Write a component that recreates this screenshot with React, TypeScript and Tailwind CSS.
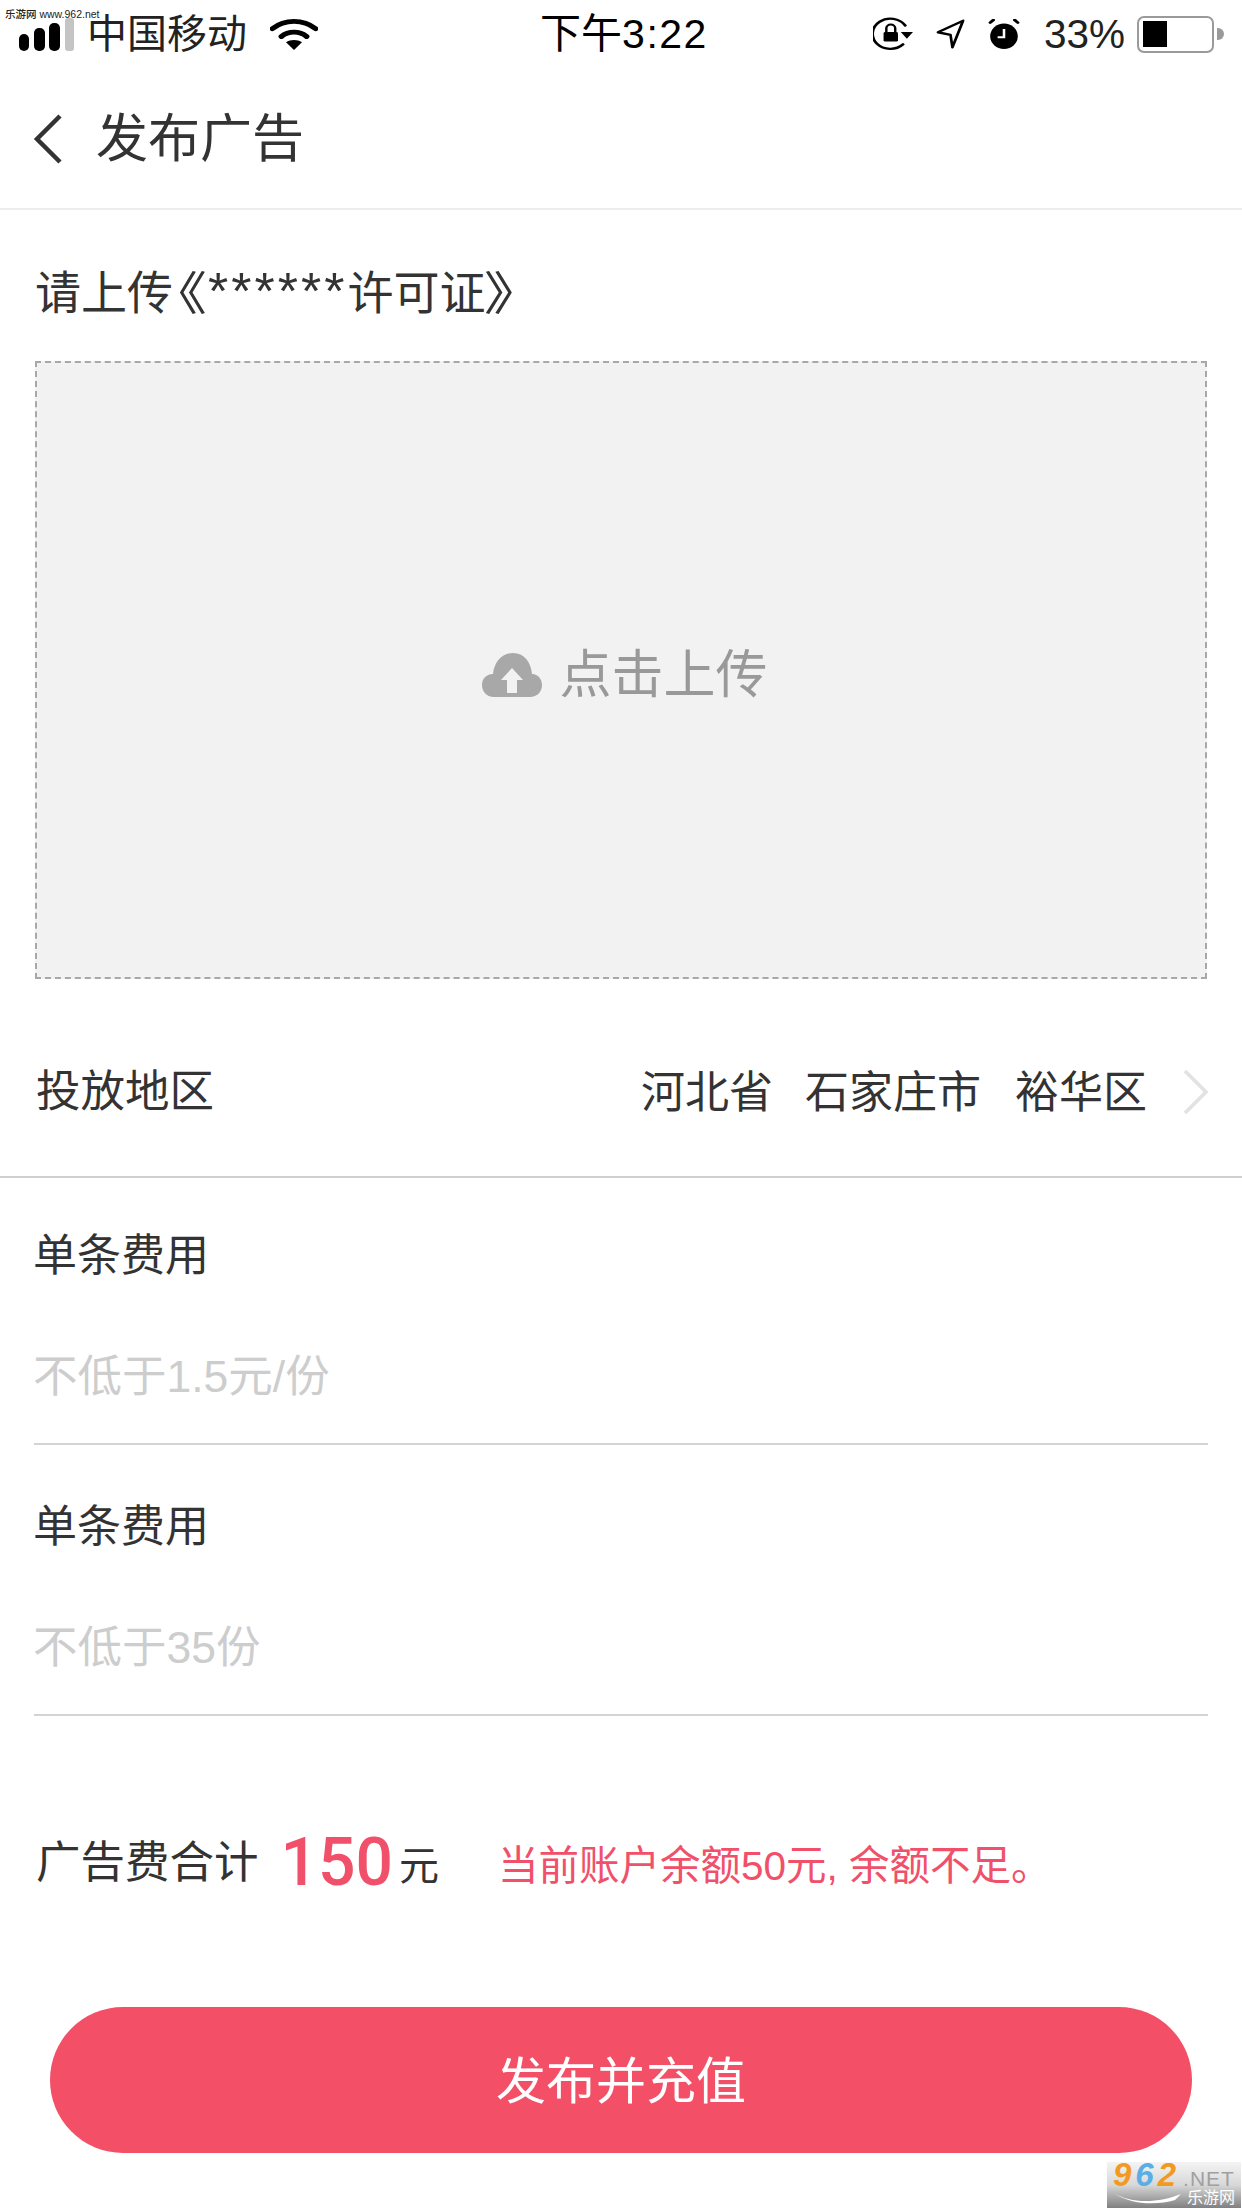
import React from 'react'

const cjk = "font-['Liberation_Sans','Noto_Sans_CJK_SC',sans-serif]"

function SignalBars() {
  return (
    <svg width="55" height="33" viewBox="0 0 55 33">
      <rect x="0" y="16" width="10" height="17" rx="5" fill="#000" />
      <rect x="15" y="10" width="11" height="23" rx="5" fill="#000" />
      <rect x="30" y="5" width="11" height="28" rx="5" fill="#000" />
      <rect x="46" y="0" width="9" height="33" rx="3" fill="#c4c4c4" />
    </svg>
  )
}

function Wifi() {
  return (
    <svg width="48" height="33" viewBox="0 0 42 34" preserveAspectRatio="none">
      <path d="M2 11 C13 1 29 1 40 11" fill="none" stroke="#000" strokeWidth="5" strokeLinecap="round" />
      <path d="M10 19 C16 13 26 13 32 19" fill="none" stroke="#000" strokeWidth="5" strokeLinecap="round" />
      <path d="M14 25 C18 22 24 22 28 25 L21 33 Z" fill="#000" />
    </svg>
  )
}

function RotationLock() {
  return (
    <svg width="40" height="34" viewBox="0 0 36 36" preserveAspectRatio="none">
      <path d="M27 29 A16 16 0 1 1 29 9" fill="none" stroke="#000" strokeWidth="2.6" strokeLinecap="round" />
      <path d="M25 16 L36 16 L30.5 23 Z" fill="#000" />
      <path d="M12 16 V12 a4 4 0 0 1 8 0 V16" fill="none" stroke="#000" strokeWidth="2.2" />
      <rect x="9.5" y="16" width="13" height="10" rx="1.5" fill="#000" />
    </svg>
  )
}

function LocationArrow() {
  return (
    <svg width="29" height="30" viewBox="0 0 30 34" preserveAspectRatio="none">
      <path d="M28 2 L2 15 L15 18 L17 32 Z" fill="none" stroke="#000" strokeWidth="2.8" strokeLinejoin="round" />
    </svg>
  )
}

function Alarm() {
  return (
    <svg width="34" height="31" viewBox="0 0 32 34" preserveAspectRatio="none">
      <ellipse cx="16" cy="19" rx="13" ry="14" fill="#000" />
      <path d="M3 4 L6 1 M29 4 L26 1" stroke="#000" strokeWidth="3" strokeLinecap="round" />
      <path d="M16 11 V20 H10" fill="none" stroke="#fff" strokeWidth="2.4" />
    </svg>
  )
}

function Battery() {
  return (
    <div className="flex items-center gap-[3px]">
      <div className="flex h-[37px] w-[77px] items-center rounded-[7px] border-2 border-[#9a9a9a] pl-[4px]">
        <div className="h-[26px] w-[24px] bg-black" />
      </div>
      <div className="h-[12px] w-[7px] rounded-r-full bg-[#9a9a9a]" />
    </div>
  )
}

function StatusBar() {
  return (
    <div className={`flex h-[68px] items-center justify-between pl-[19px] pr-[18px] text-black ${cjk}`}>
      <div className="flex w-[400px] items-center">
        <SignalBars />
        <span className="ml-[13px] text-[40px] leading-none text-[#222]">中国移动</span>
        <span className="ml-[23px] flex"><Wifi /></span>
      </div>
      <span className="ml-[5px] text-[41px] leading-none">
        下午<span className="tracking-[1.5px]">3:22</span>
      </span>
      <div className="flex w-[400px] items-center justify-end">
        <RotationLock />
        <span className="ml-[23px] flex"><LocationArrow /></span>
        <span className="ml-[22px] flex"><Alarm /></span>
        <span className="ml-[23px] text-[40.5px] leading-none text-[#222]">33%</span>
        <span className="ml-[12px] flex"><Battery /></span>
      </div>
    </div>
  )
}

function Field({ label, placeholder, tall }: { label: string; placeholder: string; tall?: boolean }) {
  return (
    <div className={tall ? 'mx-[34px] flex h-[271px] flex-col border-b-2 border-[#d4d4d4]' : 'mx-[34px] flex h-[267px] flex-col border-b-2 border-[#d4d4d4]'}>
      <div className={tall ? 'ml-[-1px] mt-[55px] text-[44px] leading-[54px] text-[#333]' : 'ml-[-1px] mt-[51px] text-[44px] leading-[54px] text-[#333]'}>{label}</div>
      <div className="ml-[-1px] mt-[67px] text-[44.5px] leading-[54px] text-[#cdcdcd]">{placeholder}</div>
    </div>
  )
}

export default function App() {
  return (
    <div className={`relative h-[2208px] w-[1242px] overflow-hidden bg-white ${cjk}`}>
      <div className="absolute left-[5px] top-[6px] text-[10.5px] font-medium leading-[16px] text-[#222]">乐游网 www.962.net</div>
      <StatusBar />

      <div className="flex h-[142px] items-center border-b-2 border-[#ececec] pt-[2px] pl-[33px]">
        <svg width="32" height="52" viewBox="0 0 32 52">
          <path d="M27 3 L4 26 L27 49" fill="none" stroke="#333" strokeWidth="4.5" />
        </svg>
        <span className="ml-[31px] text-[52px] leading-none text-[#333]">发布广告</span>
      </div>

      <div className="mt-[53px] flex h-[60px] items-baseline pl-[35px] text-[46px] leading-[60px] text-[#333]">
        <span>请上传</span>
        <span className="ml-[4px] inline-block origin-left scale-x-[1.25] [font-feature-settings:'palt']">《</span>
        <span className="ml-[8px] text-[52px] leading-none tracking-[3px]">******</span>
        <span>许可证</span>
        <span className="inline-block origin-left scale-x-[1.3] [font-feature-settings:'palt']">》</span>
      </div>

      <div className="mx-[35px] mt-[38px] flex h-[618px] items-center justify-center border-2 border-dashed border-[#a8a8a8] bg-[#f2f2f2]">
        <svg width="60" height="46" viewBox="0 0 60 46" className="ml-[8px] mt-[9px]">
          <path
            d="M12 45 C4 45 0 39 0 33 C0 26 5 22 11 22 C12 10 20 1 31 1 C42 1 49 10 50 22 C56 22 60 27 60 33 C60 40 55 45 48 45 Z"
            fill="#a8a8a8"
          />
          <path d="M30 16 L41 28 H35 V41 H25 V28 H19 Z" fill="#f2f2f2" />
        </svg>
        <span className="ml-[17px] mt-[9px] text-[52px] leading-none text-[#999]">点击上传</span>
      </div>

      <div className="mt-[2px] flex h-[197px] items-center justify-between border-b-2 border-[#d0d0d0] pl-[36px] pr-[33px] pt-[28px] text-[44px] text-[#333]">
        <span className="text-[44.5px]">投放地区</span>
        <div className="flex items-center">
          <span>河北省</span>
          <span className="ml-[32px]">石家庄市</span>
          <span className="ml-[34px]">裕华区</span>
          <svg width="26" height="46" viewBox="0 0 26 46" className="ml-[36px] mt-[-2px]">
            <path d="M2 2 L23 23 L2 44" fill="none" stroke="#e2e2e2" strokeWidth="3.5" />
          </svg>
        </div>
      </div>

      <Field label="单条费用" placeholder="不低于1.5元/份" />
      <Field label="单条费用" placeholder="不低于35份" tall />

      <div className="ml-[36px] mt-[102px] flex h-[90px] items-center text-[#333]">
        <span className="text-[44.5px] leading-none">广告费合计</span>
        <span className="ml-[22px] font-['Roboto',sans-serif] text-[66px] font-medium leading-none text-[#f0506a]">150</span>
        <span className="ml-[6px] mt-[6px] text-[40px] leading-none">元</span>
        <span className="ml-[59px] mt-[6px] text-[40.5px] leading-none text-[#f0506a]">当前账户余额50元, 余额不足。</span>
      </div>

      <div className="mx-[50px] mt-[99px] flex h-[146px] items-center justify-center rounded-full bg-[#f35068] pt-[4px] text-[50px] text-white">
        发布并充值
      </div>

      <div className="absolute left-[1107px] top-[2162px] flex h-[46px] w-[134px] flex-col bg-linear-to-b from-[#f4f4f4] via-[#d8d8d8] to-[#808080] pl-[6px] leading-none">
        <div className="flex items-baseline">
          <span className="text-[33px] font-bold italic leading-[26px] tracking-[4px] text-[#f29a1f]">9</span>
          <span className="text-[33px] font-bold italic leading-[26px] tracking-[4px] text-[#5aaee6]">6</span>
          <span className="text-[33px] font-bold italic leading-[26px] tracking-[4px] text-[#f29a1f]">2</span>
          <span className="ml-[3px] text-[21px] leading-[20px] tracking-[1px] text-[#a0a0a0]">.NET</span>
        </div>
        <div className="flex items-center">
          <svg width="70" height="14" viewBox="0 0 70 14">
            <path d="M1 2 C18 13 46 12 68 3 L62 9 C42 15 16 13 1 2 Z" fill="#fff" />
          </svg>
          <span className="ml-[4px] text-[16px] leading-[18px] text-white">乐游网</span>
        </div>
      </div>
    </div>
  )
}
